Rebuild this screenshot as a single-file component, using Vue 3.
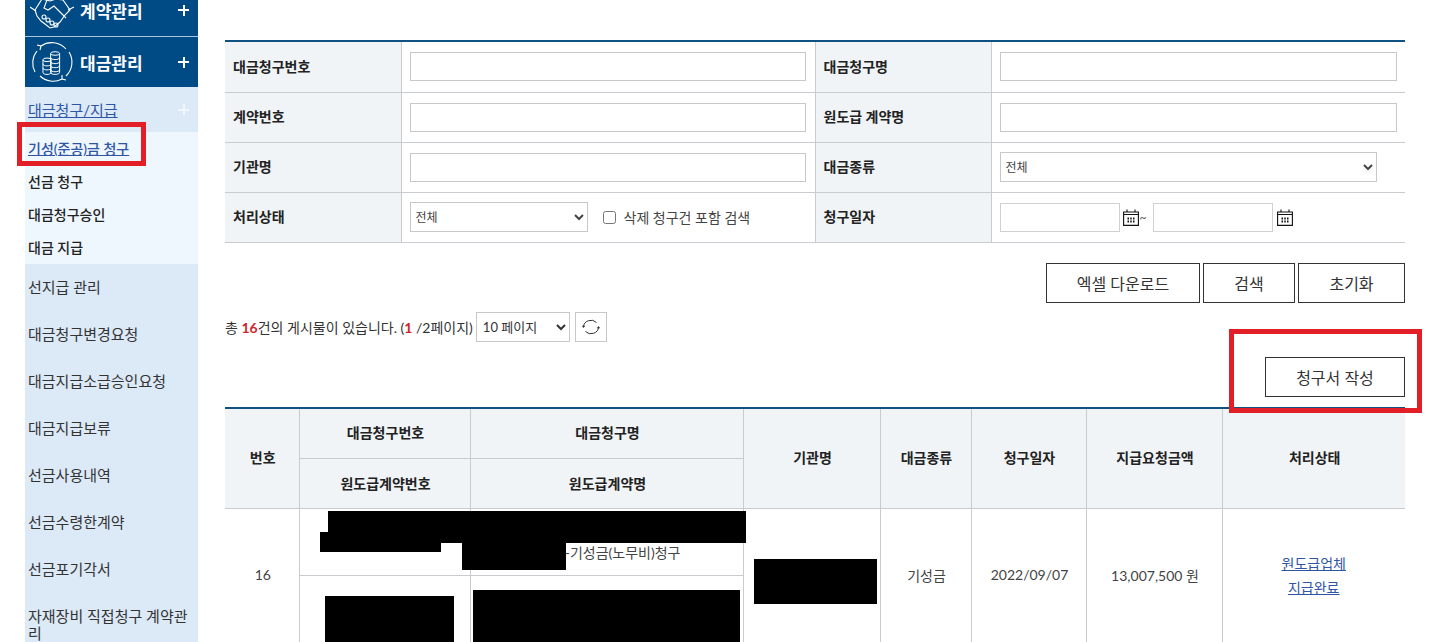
<template>
  <div class="page">
    <aside class="side">
      <a class="top-menu first">
        <svg class="ico" viewBox="3 0 50 50" width="50" height="50" fill="none" stroke="#fff" stroke-width="1.1">
          <path d="M8 25l7-11 8 2 6-2 7 1 7 10-5 5-5 7-6 5-4 1-5-4-4-3-4-5z" />
          <path d="M20 15l-3 8 4 2 6-4 6 6 6 6" />
          <path d="M20 4l4 7M35 4l-3 8M3 22l6 4M47 22l-6 3" />
          <circle cx="17" cy="32" r="2" /><circle cx="21" cy="35" r="2" /><circle cx="25" cy="38" r="2" /><circle cx="29" cy="40" r="2" />
        </svg>
        <span class="top-label">계약관리</span>
        <span class="plus"></span>
      </a>
      <a class="top-menu">
        <svg class="ico" viewBox="3 0 50 50" width="50" height="50" fill="none" stroke="#fff" stroke-width="1.1">
          <path d="M14 9a19 19 0 0 1 25 3M42 15a19 19 0 0 1-3 24M35 42a19 19 0 0 1-22-3M8 35a19 19 0 0 1 2-21" />
          <path d="M10 8l4 1-1 4M35 38l0 4 4 1" />
          <g transform="translate(2 3) scale(.9)">
            <ellipse cx="20" cy="22" rx="4.500" ry="2" /><path d="M15.500 22v14c0 3 9 3 9 0V22M15.500 26.500c0 3 9 3 9 0M15.500 31c0 3 9 3 9 0" />
            <ellipse cx="29" cy="15" rx="5" ry="2" /><path d="M24 15v21c0 3 10 3 10 0V15M24 19.500c0 3 10 3 10 0M24 24c0 3 10 3 10 0M24 28.500c0 3 10 3 10 0M24 33c0 3 10 3 10 0" />
          </g>
        </svg>
        <span class="top-label">대금관리</span>
        <span class="plus"></span>
      </a>
      <a class="sec-title"><span>대금청구/지급</span><span class="plus soft"></span></a>
      <ul class="sub-list">
        <li v-for="(s, i) in subItems" :key="s" :class="{ on: i === 0 }">{{ s }}</li>
      </ul>
      <ul class="sec-list">
        <li v-for="s in secItems" :key="s">{{ s }}</li>
      </ul>
    </aside>

    <main class="main">
      <table class="search">
        <colgroup>
          <col class="c-label" /><col class="c-val-l" /><col class="c-label" /><col />
        </colgroup>
        <tbody>
          <tr>
            <th>대금청구번호</th>
            <td><input class="field" type="text" /></td>
            <th>대금청구명</th>
            <td><input class="field" type="text" /></td>
          </tr>
          <tr>
            <th>계약번호</th>
            <td><input class="field" type="text" /></td>
            <th>원도급 계약명</th>
            <td><input class="field" type="text" /></td>
          </tr>
          <tr>
            <th>기관명</th>
            <td><input class="field" type="text" /></td>
            <th>대금종류</th>
            <td><select class="sel wide"><option>전체</option></select></td>
          </tr>
          <tr>
            <th>처리상태</th>
            <td>
              <div class="inline">
                <select class="sel status"><option>전체</option></select>
                <label class="chk"><input type="checkbox" /><span>삭제 청구건 포함 검색</span></label>
              </div>
            </td>
            <th>청구일자</th>
            <td>
              <div class="inline dates">
                <input class="field date" type="text" />
                <svg class="cal" viewBox="0 0 16 17" width="16" height="17" fill="none" stroke="#111" stroke-width="1.100">
                  <path d="M.6 3h14.800v13.400H.6zM.6 5.500h14.800" />
                  <path d="M4 .5V3M12 .5V3" />
                  <path d="M4.500 9.500h7M4.500 12.500h7" stroke-dasharray="1.500 1.250" stroke-width="2" />
                </svg>
                <span class="tilde">~</span>
                <input class="field date" type="text" />
                <svg class="cal" viewBox="0 0 16 17" width="16" height="17" fill="none" stroke="#111" stroke-width="1.100">
                  <path d="M.6 3h14.800v13.400H.6zM.6 5.500h14.800" />
                  <path d="M4 .5V3M12 .5V3" />
                  <path d="M4.500 9.500h7M4.500 12.500h7" stroke-dasharray="1.500 1.250" stroke-width="2" />
                </svg>
              </div>
            </td>
          </tr>
        </tbody>
      </table>

      <div class="actions">
        <button class="btn excel">엑셀 다운로드</button>
        <button class="btn find">검색</button>
        <button class="btn reset">초기화</button>
      </div>

      <div class="count">
        <span>총 <b>16</b>건의 게시물이 있습니다. (<b>1</b> /2페이지)</span>
        <select class="sel per"><option>10 페이지</option></select>
        <button class="refresh" aria-label="새로고침">
          <svg viewBox="0 0 20 20" width="20" height="20" fill="none" stroke="#333" stroke-width="1">
            <path d="M2.500 10a7.500 7 0 0 1 13-4.500M17.500 10a7.500 7 0 0 1-13 4.500" />
            <path d="M0.800 8.800h3.400l-1.700 2.200zM19.200 11.200h-3.400l1.700-2.200z" fill="#333" stroke="none" />
          </svg>
        </button>
      </div>

      <div class="write-row">
        <button class="btn write">청구서 작성</button>
      </div>

      <table class="list">
        <colgroup>
          <col v-for="w in colWidths" :key="w" :style="{ width: w + 'px' }" />
        </colgroup>
        <thead>
          <tr>
            <th rowspan="2" class="edge">번호</th>
            <th>대금청구번호</th>
            <th>대금청구명</th>
            <th rowspan="2">기관명</th>
            <th rowspan="2">대금종류</th>
            <th rowspan="2">청구일자</th>
            <th rowspan="2">지급요청금액</th>
            <th rowspan="2">처리상태</th>
          </tr>
          <tr>
            <th>원도급계약번호</th>
            <th>원도급계약명</th>
          </tr>
        </thead>
        <tbody>
          <tr>
            <td rowspan="2" class="edge">16</td>
            <td></td>
            <td class="claim-name">-기성금(노무비)청구</td>
            <td rowspan="2"></td>
            <td rowspan="2">기성금</td>
            <td rowspan="2">2022/09/07</td>
            <td rowspan="2">13,007,500 원</td>
            <td rowspan="2" class="state"><a>원도급업체</a><a>지급완료</a></td>
          </tr>
          <tr>
            <td></td>
            <td></td>
          </tr>
        </tbody>
      </table>
    </main>

    <!-- 가림 처리된 영역 -->
    <i v-for="(m, i) in masks" :key="i" class="mask" :style="maskStyle(m)"></i>

    <!-- 빨간 강조 박스 -->
    <i class="mark mark-menu"></i>
    <i class="mark mark-write"></i>
  </div>
</template>

<script setup>
const subItems = ['기성(준공)금 청구', '선금 청구', '대금청구승인', '대금 지급']
const secItems = [
  '선지급 관리',
  '대금청구변경요청',
  '대금지급소급승인요청',
  '대금지급보류',
  '선금사용내역',
  '선금수령한계약',
  '선금포기각서',
  '자재장비 직접청구 계약관리',
]
const colWidths = [74, 171, 273, 137, 91, 115, 136, 183]

const masks = [
  { x: 328, y: 511, w: 418, h: 32 },
  { x: 320, y: 532, w: 121, h: 20 },
  { x: 462, y: 543, w: 104, h: 27 },
  { x: 754, y: 559, w: 123, h: 45 },
  { x: 325, y: 596, w: 129, h: 46 },
  { x: 473, y: 590, w: 267, h: 52 },
]
function maskStyle(m) {
  return { left: m.x + 'px', top: m.y + 'px', width: m.w + 'px', height: m.h + 'px' }
}
</script>

<style scoped>
.page {
  position: relative;
  display: flex;
  align-items: flex-start;
  gap: 27px;
  width: 1436px;
  height: 642px;
  padding-left: 25px;
  box-sizing: border-box;
  overflow: hidden;
  background: #fff;
  color: #333;
  font-family: Lato, "Noto Sans CJK KR", sans-serif;
  font-size: 14px;
}

/* 왼쪽 메뉴 */
.side {
  flex: none;
  width: 173px;
  margin-top: -14px;
}
.top-menu {
  display: flex;
  align-items: center;
  height: 50px;
  background: #004b85;
  color: #fff;
  padding-left: 5px;
}
.top-menu.first {
  height: 48px;
  padding-bottom: 2px;
  border-bottom: 1px solid #a9c4dc;
}
.ico {
  flex: none;
}
.top-label {
  flex: 1;
  font-size: 17px;
  font-weight: 700;
}
.plus {
  flex: none;
  width: 11px;
  height: 11px;
  margin-right: 9px;
  background:
    linear-gradient(#fff, #fff) center / 100% 2px no-repeat,
    linear-gradient(#fff, #fff) center / 2px 100% no-repeat;
}
.plus.soft {
  opacity: 0.6;
}
.sec-title {
  display: flex;
  align-items: center;
  justify-content: space-between;
  height: 45px;
  padding-left: 3px;
  background: #dce9f7;
  color: #2f55a4;
  font-size: 15px;
}
.sec-title span:first-child {
  text-decoration: underline;
}
.sub-list,
.sec-list {
  list-style: none;
  margin: 0;
  padding: 0;
}
.sub-list {
  background: #eef6fe;
}
.sub-list li {
  height: 33px;
  line-height: 33px;
  padding-left: 3px;
  font-weight: 500;
  color: #222;
}
.sub-list li.on {
  color: #2f55a4;
  text-decoration: underline;
}
.sec-list {
  background: #dce9f7;
}
.sec-list li {
  padding: 15px 8px 15px 3px;
  line-height: 17px;
  font-size: 15px;
  color: #333;
}

/* 검색 영역 */
.main {
  flex: none;
  width: 1180px;
  padding-top: 40px;
}
.search,
.list {
  width: 100%;
  table-layout: fixed;
  border-collapse: collapse;
}
.search {
  border-top: 2px solid #0f5282;
}
.c-label {
  width: 176px;
}
.c-val-l {
  width: 414px;
}
.search th,
.search td {
  height: 50px;
  padding: 0;
  box-sizing: border-box;
  border-bottom: 1px solid #c8ccd0;
  border-left: 1px solid #c8ccd0;
}
.search tr:first-child th,
.search tr:first-child td {
  height: 51px;
}
.search th:first-child,
.list .edge {
  border-left: 0;
}
.search th {
  padding: 0 0 2px 8px;
  background: #f1f4f7;
  color: #222;
  font-weight: 700;
  text-align: left;
}
.search td {
  padding: 0 8px;
}
.search td:nth-child(2) {
  padding-right: 9px;
}
.field {
  display: block;
  width: 100%;
  height: 29px;
  padding: 0 4px;
  box-sizing: border-box;
  border: 1px solid #c8c8c8;
  background: #fff;
  font: inherit;
}
.sel {
  height: 30px;
  padding: 0 0 0 1px;
  box-sizing: border-box;
  border: 1px solid #c8c8c8;
  border-radius: 0;
  background: #fff;
  color: #444;
  font-family: inherit;
  font-size: 12px;
}
.sel.wide {
  display: block;
  width: 377px;
}
.sel.status {
  width: 178px;
}
.inline {
  display: flex;
  align-items: center;
}
.chk {
  display: flex;
  align-items: center;
  margin-left: 15px;
  color: #444;
}
.chk input {
  width: 13px;
  height: 13px;
  margin: 0 8px 0 0;
}
.field.date {
  flex: none;
  width: 120px;
  border-color: #d0d0d0;
}
.cal {
  flex: none;
  margin-left: 3px;
}
.tilde {
  width: 14px;
  padding-left: 1px;
  box-sizing: border-box;
  color: #555;
  font-size: 12px;
}
.tilde + .field + .cal {
  margin-left: 4px;
}

/* 버튼 */
.actions {
  display: flex;
  justify-content: flex-end;
  gap: 3px;
  margin-top: 20px;
}
.btn {
  height: 40px;
  padding: 0;
  border: 1px solid #333;
  background: #fff;
  color: #333;
  font-family: inherit;
  font-size: 16px;
}
.excel {
  width: 154px;
}
.find {
  width: 92px;
}
.reset {
  width: 107px;
}
.count {
  display: flex;
  align-items: center;
  height: 30px;
  margin-top: 9px;
  color: #333;
}
.count b {
  color: #d2232a;
  font-weight: 700;
}
.sel.per {
  width: 94px;
  margin-left: 3px;
  padding-left: 2px;
  font-size: 13px;
  color: #333;
}
.refresh {
  display: flex;
  align-items: center;
  justify-content: center;
  width: 32px;
  height: 30px;
  margin-left: 5px;
  padding: 0;
  border: 1px solid #c8c8c8;
  background: #fff;
}
.write-row {
  display: flex;
  justify-content: flex-end;
  margin-top: 15px;
}
.write {
  width: 140px;
}

/* 목록 */
.list {
  margin-top: 10px;
  border-top: 2px solid #0f5282;
}
.list th,
.list td {
  padding: 0 0 2px 2px;
  border-left: 1px solid #c8ccd0;
  border-bottom: 1px solid #c8ccd0;
  text-align: center;
  font-size: 14px;
}
.list th {
  height: 50px;
  box-sizing: border-box;
  background: #f1f4f7;
  color: #222;
  font-weight: 700;
}
.list thead tr:first-child th {
  height: 51px;
}
.list td {
  height: 67px;
  box-sizing: border-box;
  color: #444;
}
.list td.claim-name {
  padding: 20px 62px 0 0;
  text-align: right;
}
.list td.state {
  padding: 0;
}
.state a {
  display: block;
  color: #2f55a4;
  text-decoration: underline;
  line-height: 24px;
}

/* 오버레이 */
.mask {
  position: absolute;
  background: #000;
}
.mark {
  position: absolute;
  box-sizing: border-box;
  border: 5px solid #e21f26;
}
.mark-menu {
  left: 17px;
  top: 122px;
  width: 129px;
  height: 44px;
}
.mark-write {
  left: 1229px;
  top: 329px;
  width: 193px;
  height: 84px;
}
</style>

<style>
html,
body {
  margin: 0;
  overflow: hidden;
}
</style>
